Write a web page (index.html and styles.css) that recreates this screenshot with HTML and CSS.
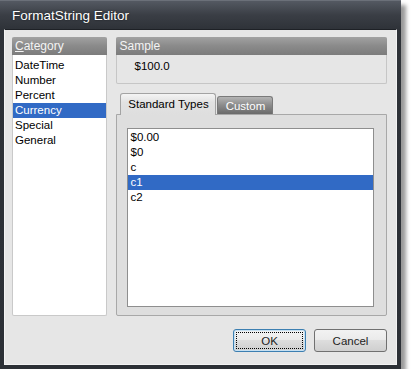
FILE: index.html
```html
<!DOCTYPE html>
<html lang="en">
<head>
    <meta charset="UTF-8">
    <title>FormatString Editor</title>
    <link rel="stylesheet" href="styles.css">
</head>
<body>
    <div class="window">
        <div class="titlebar">FormatString Editor</div>
        <div class="client">
            <div class="main">
                <div class="category">
                    <div class="panel-header"><u>C</u>ategory</div>
                    <ul class="list">
                        <li>DateTime</li>
                        <li>Number</li>
                        <li>Percent</li>
                        <li class="selected">Currency</li>
                        <li>Special</li>
                        <li>General</li>
                    </ul>
                </div>
                <div class="right">
                    <div class="sample">
                        <div class="panel-header">Sample</div>
                        <div class="sample-value">$100.0</div>
                    </div>
                    <div class="tabs">
                        <div class="tab active">Standard Types</div>
                        <div class="tab">Custom</div>
                    </div>
                    <div class="tab-page">
                        <ul class="list listbox">
                            <li>$0.00</li>
                            <li>$0</li>
                            <li>c</li>
                            <li class="selected">c1</li>
                            <li>c2</li>
                        </ul>
                    </div>
                </div>
            </div>
            <div class="buttons">
                <button class="btn focused"><span>OK</span></button>
                <button class="btn"><span>Cancel</span></button>
            </div>
        </div>
    </div>
</body>
</html>
```

FILE: styles.css
```css
body {
    margin: 0;
    background: #ffffff;
    font-family: "Liberation Sans", Arial, sans-serif;
    font-size: 11px;
    color: #000;
}
.window {
    width: 401px;
    height: 369px;
    box-sizing: border-box;
    padding: 0 4px 4px 4px;
    background: linear-gradient(#545962 0, #3a3e45 14px, #2e3238 29px, #2c3036 100%);
    border-top: 1px solid #6b7079;
    box-shadow: 5px 5px 4px rgba(0, 0, 0, 0.4);
    display: flex;
    flex-direction: column;
}
.titlebar {
    height: 28px;
    line-height: 29px;
    padding-left: 8px;
    color: #ffffff;
    font-size: 13.5px;
    text-shadow: 0 0 2px rgba(0, 0, 0, 0.6);
}
.client {
    flex: 1;
    background: #e6e6e6;
    border: 1px solid #f3f3f3;
    border-top-color: #1e2126;
    display: flex;
    flex-direction: column;
    padding: 7px 9px 0 7px;
}
.main {
    display: flex;
    gap: 9px;
    height: 279px;
}
.category {
    width: 96px;
    display: flex;
    flex-direction: column;
    background: #fff;
    border: 1px solid #c9c9c9;
    border-top: none;
    border-radius: 2px;
    box-sizing: border-box;
}
.panel-header {
    height: 18px;
    line-height: 18px;
    padding-left: 3px;
    color: #f4f4f4;
    font-size: 12px;
    background: linear-gradient(#a2a2a2, #8a8a8a 50%, #7c7c7c);
    border-radius: 2px 2px 0 0;
}
.category .panel-header {
    margin: 0 -1px;
}
.list {
    list-style: none;
    margin: 0;
    padding: 3px 0 0 0;
}
.list li {
    height: 15px;
    line-height: 15px;
    padding-left: 2px;
    font-size: 11.5px;
}
.list li.selected {
    background: #316ac5;
    color: #fff;
}
.right {
    width: 272px;
    display: flex;
    flex-direction: column;
}
.sample {
    height: 47px;
    border: 1px solid #c6c6c6;
    border-top: none;
    border-radius: 2px;
    box-sizing: border-box;
}
.sample .panel-header {
    margin: 0 -1px;
}
.sample-value {
    padding: 5px 0 0 17px;
    font-size: 11.5px;
}
.tabs {
    display: flex;
    align-items: flex-end;
    margin-top: 9px;
    padding-left: 4px;
    gap: 1px;
    height: 21px;
    position: relative;
    z-index: 1;
}
.tab {
    width: 56px;
    box-sizing: border-box;
    text-align: center;
    height: 18px;
    line-height: 18px;
    font-size: 11.5px;
    border: 1px solid #7a7a7a;
    border-bottom: none;
    border-radius: 3px 3px 0 0;
    color: #fff;
    background: linear-gradient(#b4b4b4, #8a8a8a 50%, #6a6a6a);
}
.tab.active {
    width: 96px;
    height: 22px;
    line-height: 21px;
    margin-bottom: -1px;
    color: #000;
    border-color: #a3a3a3;
    background: linear-gradient(#f4f4f4, #e2e2e2 40%, #dedede);
}
.tab-page {
    flex: 1;
    background: #dedede;
    border: 1px solid #a8a8a8;
    border-radius: 0 0 2px 2px;
    padding: 13px 12px 8px 10px;
    display: flex;
}
.listbox {
    flex: 1;
    background: #fff;
    border: 1px solid #8e8e8e;
    padding-top: 1px;
}
.buttons {
    display: flex;
    justify-content: flex-end;
    gap: 8px;
    margin-top: 13px;
}
.btn {
    width: 73px;
    height: 23px;
    padding: 0;
    border: 1px solid #707070;
    border-radius: 3px;
    font-family: "Liberation Sans", Arial, sans-serif;
    font-size: 11.5px;
    color: #1e1e1e;
    background: linear-gradient(#f2f2f2, #ebebeb 45%, #dddddd 50%, #cfcfcf);
    display: flex;
    align-items: center;
    justify-content: center;
}
.btn.focused {
    border-color: #3c7fb1;
    box-shadow: inset 0 0 0 1px #c6e0f2;
}
.btn.focused span {
    display: flex;
    align-items: center;
    justify-content: center;
    width: 65px;
    height: 15px;
    border: 1px dotted #000;
}
```
